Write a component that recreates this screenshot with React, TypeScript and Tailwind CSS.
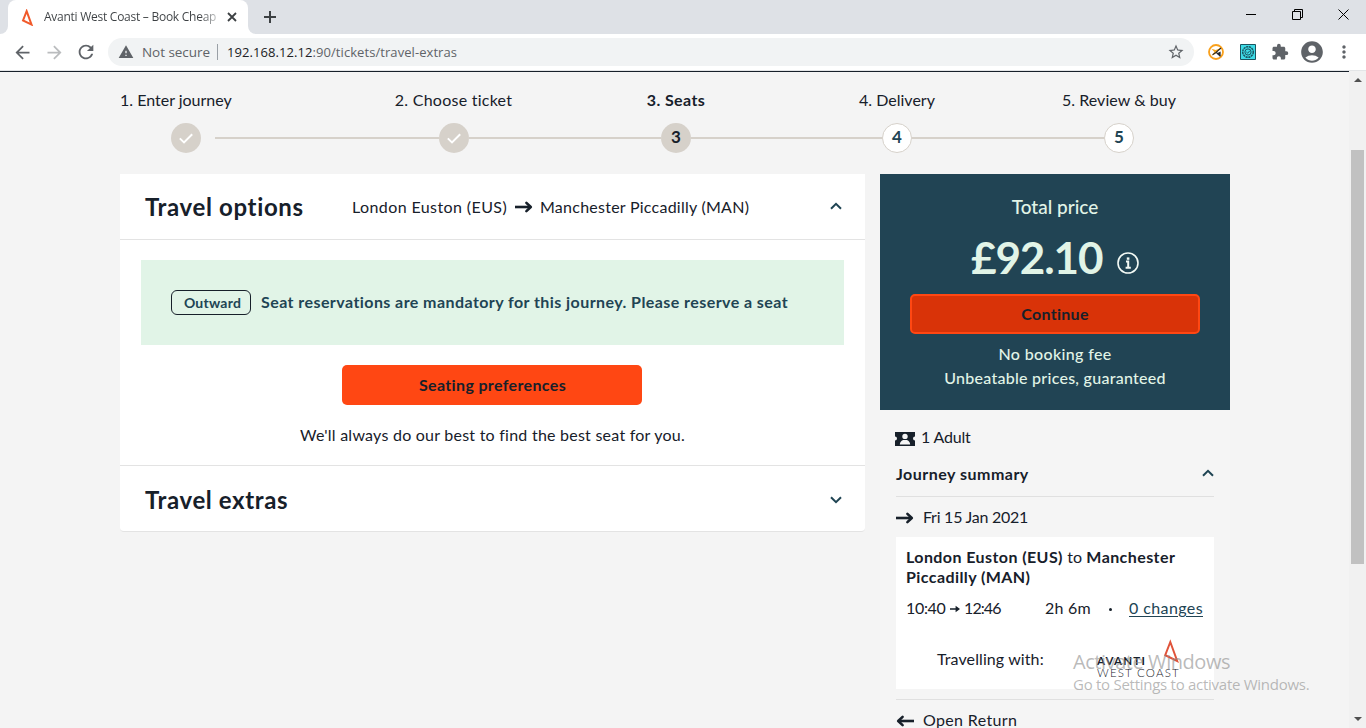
import React from "react";
import {
  MdArrowBack,
  MdArrowForward,
  MdRefresh,
  MdWarning,
  MdStarBorder,
  MdExtension,
  MdAccountCircle,
  MdMoreVert,
} from "react-icons/md";

function Arrow({ className = "", flip = false }: { className?: string; flip?: boolean }) {
  return (
    <svg viewBox="0 0 18 12" className={`h-3 w-[18px] shrink-0 ${className}`} fill="none" stroke="#17202a" strokeWidth="2.6">
      <g transform={flip ? "translate(18 0) scale(-1 1)" : undefined}>
        <path d="M0 6H15" />
        <path d="M11.4 1.9L15.8 6L11.4 10.1" strokeLinecap="round" strokeLinejoin="round" />
      </g>
    </svg>
  );
}

function Chevron({ down = false, className = "" }: { down?: boolean; className?: string }) {
  return (
    <svg viewBox="0 0 12 8" className={`h-2 w-3 shrink-0 ${className}`} fill="none" stroke="#1f4453" strokeWidth="2">
      <path d={down ? "M1 1.2L6 6.2L11 1.2" : "M1 6.8L6 1.8L11 6.8"} />
    </svg>
  );
}

function BrandMark({ className = "", stroke, strokeWidth = 2 }: { className?: string; stroke: string; strokeWidth?: number }) {
  return (
    <svg viewBox="0 0 17 24" className={className} fill="none" stroke={stroke} strokeWidth={strokeWidth}>
      <path d="M7.3 3L2.2 16.2L14.2 22Z" strokeLinejoin="miter" />
    </svg>
  );
}

function TabStrip() {
  return (
    <div className="flex h-[34px] shrink-0 bg-[#dee1e6] text-[#3c4043]">
      <div className="flex h-full w-2 items-end bg-white">
        <div className="h-full w-2 rounded-br-lg bg-[#dee1e6]" />
      </div>
      <div className="flex h-full w-60 items-center rounded-t-lg bg-white pl-[13px]">
        <BrandMark className="h-[17px] w-[13px]" stroke="#f15a2b" strokeWidth={2.8} />
        <div className="ml-[10px] w-[173px] overflow-hidden bg-gradient-to-r from-[#3c4043] from-90% to-[#3c4043]/30 bg-clip-text font-['Open_Sans',sans-serif] text-[12px] tracking-[-0.26px] whitespace-nowrap text-transparent">
          Avanti West Coast – Book Cheap
        </div>
        <svg viewBox="0 0 10 10" className="ml-[10px] size-[10px]" stroke="#3c4043" strokeWidth="1.8">
          <path d="M1 1L9 9M9 1L1 9" />
        </svg>
      </div>
      <div className="h-full w-2 bg-white">
        <div className="h-full w-2 rounded-bl-lg bg-[#dee1e6]" />
      </div>
      <svg viewBox="0 0 12 12" className="mt-[11px] ml-2 size-3" stroke="#3c4043" strokeWidth="2">
        <path d="M6 0V12M0 6H12" />
      </svg>
      <div className="mt-[9px] mr-[17px] ml-auto flex h-[11px] gap-[35px]">
        <svg viewBox="0 0 11 11" className="size-[11px]" stroke="#000">
          <path d="M0 5.5H10" />
        </svg>
        <svg viewBox="0 0 11 11" className="size-[11px]" fill="none" stroke="#000">
          <path d="M0.5 2.5H8.5V10.5H0.5ZM2.5 2.5V0.5H10.5V8.5H8.5" />
        </svg>
        <svg viewBox="0 0 11 11" className="size-[11px]" stroke="#000">
          <path d="M0.5 0.5L10.5 10.5M10.5 0.5L0.5 10.5" />
        </svg>
      </div>
    </div>
  );
}

function Cell({ children }: { children: React.ReactNode }) {
  return <div className="flex w-8 shrink-0 items-center justify-center">{children}</div>;
}

function Toolbar() {
  return (
    <div className="flex h-9 shrink-0 items-center bg-white pr-[6px] pl-[6px] text-[#5f6368]">
      <Cell><MdArrowBack size={21} /></Cell>
      <Cell><MdArrowForward size={21} className="text-[#babcbe]" /></Cell>
      <Cell><MdRefresh size={22} /></Cell>
      <div className="ml-[6px] flex h-7 w-[1086px] shrink-0 items-center rounded-full bg-[#f1f3f4] font-['Open_Sans',sans-serif] whitespace-nowrap">
        <MdWarning size={16} className="ml-[10px]" />
        <span className="ml-2 w-[75px] text-[13.5px] tracking-[-0.05px]">Not secure</span>
        <span className="mr-[9px] h-4 w-px bg-[#9aa0a6]" />
        <span className="pt-px text-[13px] tracking-[0.07px]">
          <span className="text-[#202124]">192.168.12.12</span>:90/tickets/travel-extras
        </span>
        <MdStarBorder size={18} className="mr-[9px] ml-auto" />
      </div>
      <div className="ml-[6px] flex">
        <Cell>
          <svg viewBox="0 0 16 16" className="size-4" fill="none">
            <circle cx="8" cy="8" r="7" fill="#fff" stroke="#f9a01b" strokeWidth="1.8" />
            <path d="M3.4 4.8L7.8 6L12.6 4L9.4 8L7.6 9.8L3.6 11.8L6.4 8Z" fill="#f7a81f" />
            <path d="M13 4L8 8.4L4.6 10.8M8.6 8.6L12.4 12.4" stroke="#26292c" strokeWidth="1.2" />
            <path d="M12.6 7.4V12.2L8.4 9.4Z" fill="#26292c" />
          </svg>
        </Cell>
        <Cell>
          <svg viewBox="0 0 16 16" className="size-4" fill="none" stroke="#1b5560">
            <path d="M0.5 0.5H15.5V15.5H0.5Z" fill="#3edbe6" />
            <circle cx="8" cy="8" r="5.3" strokeWidth="1.5" strokeDasharray="2.2 0.6" />
            <circle cx="8" cy="8" r="3.1" />
            <path d="M6.4 8L7.6 9.2L9.8 6.8" />
          </svg>
        </Cell>
        <Cell><MdExtension size={18} /></Cell>
        <Cell><MdAccountCircle size={26} className="shrink-0" /></Cell>
        <Cell><MdMoreVert size={20} /></Cell>
      </div>
    </div>
  );
}

function DoneCircle() {
  return (
    <span className="flex size-[30px] shrink-0 items-center justify-center rounded-full bg-[#d6d1ca]">
      <svg viewBox="0 0 14 11" className="h-[11px] w-[14px]" fill="none" stroke="#fff" strokeWidth="2">
        <path d="M0.8 5.4L5 9.4L13.2 1.2" />
      </svg>
    </span>
  );
}

function Line({ className }: { className: string }) {
  return <span className={`h-[2px] shrink-0 bg-[#d6d1ca] ${className}`} />;
}

function Progress() {
  return (
    <div className="mx-[120px] w-[1110px] pt-[18px]">
      <div className="grid grid-cols-5 text-center text-base leading-5">
        <span className="text-left">1. Enter journey</span>
        <span className="pl-px tracking-[0.25px]">2. Choose ticket</span>
        <span className="pl-[2px] font-bold tracking-[0.4px]">3. Seats</span>
        <span>4. Delivery</span>
        <span className="tracking-[0.06px]">5. Review &amp; buy</span>
      </div>
      <div className="mt-[13px] flex items-center pl-[51px] text-base font-bold">
        <DoneCircle />
        <Line className="ml-[14px] w-[224px]" />
        <DoneCircle />
        <Line className="w-[192px]" />
        <span className="flex size-[30px] items-center justify-center rounded-full bg-[#d6d1ca] pb-[2px] text-[17px]">3</span>
        <Line className="w-[191px]" />
        <span className="flex size-[30px] items-center justify-center rounded-full border border-[#d6d1ca] bg-white pb-[2px] text-[17px] text-[#214454]">4</span>
        <Line className="w-[192px]" />
        <span className="flex size-[30px] items-center justify-center rounded-full border border-[#d6d1ca] bg-white pb-[2px] text-[17px] text-[#214454]">5</span>
      </div>
    </div>
  );
}

function TravelCard() {
  return (
    <section className="h-[358px] w-[745px] shrink-0 rounded-b border-b border-[#e3e3e3] bg-white">
      <div className="flex h-[66px] items-center border-b border-[#e3e3e3] pr-[23px] pl-[25px]">
        <h2 className="w-[207px] text-2xl font-bold tracking-[0.64px]">Travel options</h2>
        <span className="w-[163px] tracking-[0.4px]">London Euston (EUS)</span>
        <Arrow />
        <span className="ml-[7px] tracking-[0.25px]">Manchester Piccadilly (MAN)</span>
        <Chevron className="mb-[2px] ml-auto" />
      </div>
      <div className="flex h-[226px] flex-col items-center border-b border-[#e3e3e3] pt-5">
        <div className="flex h-[85px] w-[703px] items-center bg-[#e1f4e7] pl-[30px] font-bold text-[#214454]">
          <span className="flex h-[25px] w-20 items-center justify-center rounded-[6px] border border-[#17202a] pl-[3px] text-sm tracking-[0.23px]">
            Outward
          </span>
          <span className="mb-px ml-[10px] tracking-[0.43px]">
            Seat reservations are mandatory for this journey. Please reserve a seat
          </span>
        </div>
        <button className="mt-5 mr-px h-10 w-[300px] shrink-0 rounded-[5px] bg-[#ff4713] pl-px font-bold tracking-[0.35px]">
          Seating preferences
        </button>
        <p className="mt-[18px] tracking-[0.24px]">We'll always do our best to find the best seat for you.</p>
      </div>
      <div className="flex h-[65px] items-center pt-[2px] pr-[23px] pl-[25px]">
        <h2 className="text-2xl font-bold tracking-[0.61px]">Travel extras</h2>
        <Chevron down className="ml-auto" />
      </div>
    </section>
  );
}

function PricePanel() {
  return (
    <div className="flex h-[236px] flex-col items-center bg-[#214454] pt-[21px] text-[#e1f4e7]">
      <p className="text-[19px] leading-6 font-medium">Total price</p>
      <div className="mt-3 flex h-14 w-[168px] items-center">
        <span className="mb-1 w-[146px] text-[44px] font-bold tracking-[-1.1px]">£92.10</span>
        <svg viewBox="0 0 22 22" className="mt-2 size-[22px] shrink-0" fill="none" stroke="#f3faf5" strokeWidth="1.6">
          <circle cx="11" cy="11" r="10" />
          <path d="M9 9.6H11.2V15.6M8.6 15.8H13.8" strokeWidth="2" />
          <path d="M9.8 6.6H12.4" strokeWidth="2.4" />
        </svg>
      </div>
      <button className="mt-[7px] h-10 w-[290px] shrink-0 rounded-[5px] border-2 border-[#ff4713] bg-[#d93308] font-bold tracking-[0.3px] text-[#17202a]">
        Continue
      </button>
      <p className="mt-2 leading-6 font-medium tracking-[0.35px]">No booking fee</p>
      <p className="leading-6 font-medium tracking-[0.26px]">Unbeatable prices, guaranteed</p>
    </div>
  );
}

function JourneySummary() {
  return (
    <div className="flex flex-col px-4 leading-5">
      <div className="-ml-px mt-[17px] flex items-center">
        <svg viewBox="0 0 20 14" className="mt-[2px] h-[14px] w-5">
          <path d="M0 0H20V4.6A2 2 0 0 0 20 8.6V14H0V8.6A2 2 0 0 0 0 4.6Z" fill="#17202a" />
          <circle cx="10" cy="4.4" r="2.7" fill="#f5f5f5" />
          <path d="M4.8 12.6C5 9.8 6.6 8.4 8.2 8H11.8C13.4 8.4 15 9.8 15.2 12.6Z" fill="#f5f5f5" />
        </svg>
        <span className="mb-px ml-[6px] tracking-[-0.2px]">1 Adult</span>
      </div>
      <div className="mt-[16px] flex h-[33px] items-start justify-between border-b border-[#e0e0e0] pt-px">
        <span className="-mt-px font-bold tracking-[0.49px]">Journey summary</span>
        <Chevron className="mt-1" />
      </div>
      <div className="mt-[10px] flex items-center">
        <Arrow className="mt-px" />
        <span className="ml-[9px] tracking-[-0.25px]">Fri 15 Jan 2021</span>
      </div>
      <div className="mt-[10px] h-[152px] bg-white pt-[10px] pl-[10px]">
        <p className="font-bold tracking-[0.42px]">
          London Euston (EUS) <span className="font-normal tracking-normal">to</span> Manchester
          <br />
          Piccadilly (MAN)
        </p>
        <div className="mt-[11px] flex items-center">
          <span className="w-[44px] tracking-[-0.33px]">10:40</span>
          <svg viewBox="0 0 10 8" className="mt-[2px] h-2 w-[10px]" fill="#17202a">
            <path d="M0 3.2H5.6V0.8L10 4L5.6 7.2V4.8H0Z" />
          </svg>
          <span className="ml-1 w-[81px] tracking-[-0.9px]">12:46</span>
          <span className="w-[64px] tracking-[0.25px]">2h 6m</span>
          <span className="mt-[2px] size-[3px] rounded-full bg-[#17202a]" />
          <span className="ml-[17px] tracking-[0.4px] text-[#214454] underline underline-offset-2">0 changes</span>
        </div>
        <div className="mt-[21px] flex items-start">
          <span className="mt-[10px] ml-[31px] w-[160px] tracking-[0.1px]">Travelling with:</span>
          <div className="flex">
            <div className="pt-4 text-[11.5px] leading-[11px]">
              <p className="font-bold tracking-[1.2px]">AVANTI</p>
              <p className="mt-px w-[66px] font-light tracking-[1.2px] whitespace-nowrap">WEST COAST</p>
            </div>
            <BrandMark className="h-6 w-[17px]" stroke="#e0533a" />
          </div>
        </div>
      </div>
      <div className="mt-[10px] flex items-center border-t border-[#e0e0e0] pt-[10px]">
        <Arrow flip className="mt-px" />
        <span className="ml-[9px] tracking-[0.35px]">Open Return</span>
      </div>
    </div>
  );
}

function Scrollbar() {
  return (
    <div className="flex w-[17px] shrink-0 flex-col items-center bg-[#f1f1f1]">
      <svg viewBox="0 0 8 4" className="mt-[7px] h-1 w-2" fill="#505050">
        <path d="M0 4L4 0L8 4Z" />
      </svg>
      <div className="mt-[68px] h-[414px] w-[13px] bg-[#c1c1c1]" />
      <svg viewBox="0 0 8 4" className="mt-auto mb-[7px] h-1 w-2" fill="#505050">
        <path d="M0 0L4 4L8 0Z" />
      </svg>
    </div>
  );
}

export default function App() {
  return (
    <div className="relative flex h-[728px] w-[1366px] flex-col overflow-hidden bg-white font-['Lato',sans-serif] text-base text-[#17202a]">
      <TabStrip />
      <Toolbar />
      <div className="h-px w-[1366px] shrink-0 bg-[#e3e5e7]" />
      <div className="flex min-h-0 flex-1">
        <main className="w-[1349px] overflow-hidden border-t border-[#17202a] bg-[#f4f4f4] whitespace-nowrap">
          <Progress />
          <div className="mt-[21px] flex gap-[15px] pl-[120px]">
            <TravelCard />
            <aside className="w-[350px] shrink-0 bg-[#f5f5f5]">
              <PricePanel />
              <JourneySummary />
            </aside>
          </div>
        </main>
        <Scrollbar />
      </div>
      <div className="pointer-events-none absolute top-[648px] left-[1073px] font-['Open_Sans',sans-serif] whitespace-nowrap text-[#8c8c8c]/60">
        <p className="text-xl leading-7 tracking-[-0.44px]">Activate Windows</p>
        <p className="-mt-px text-[15px] leading-[18px] tracking-[-0.27px]">Go to Settings to activate Windows.</p>
      </div>
    </div>
  );
}
